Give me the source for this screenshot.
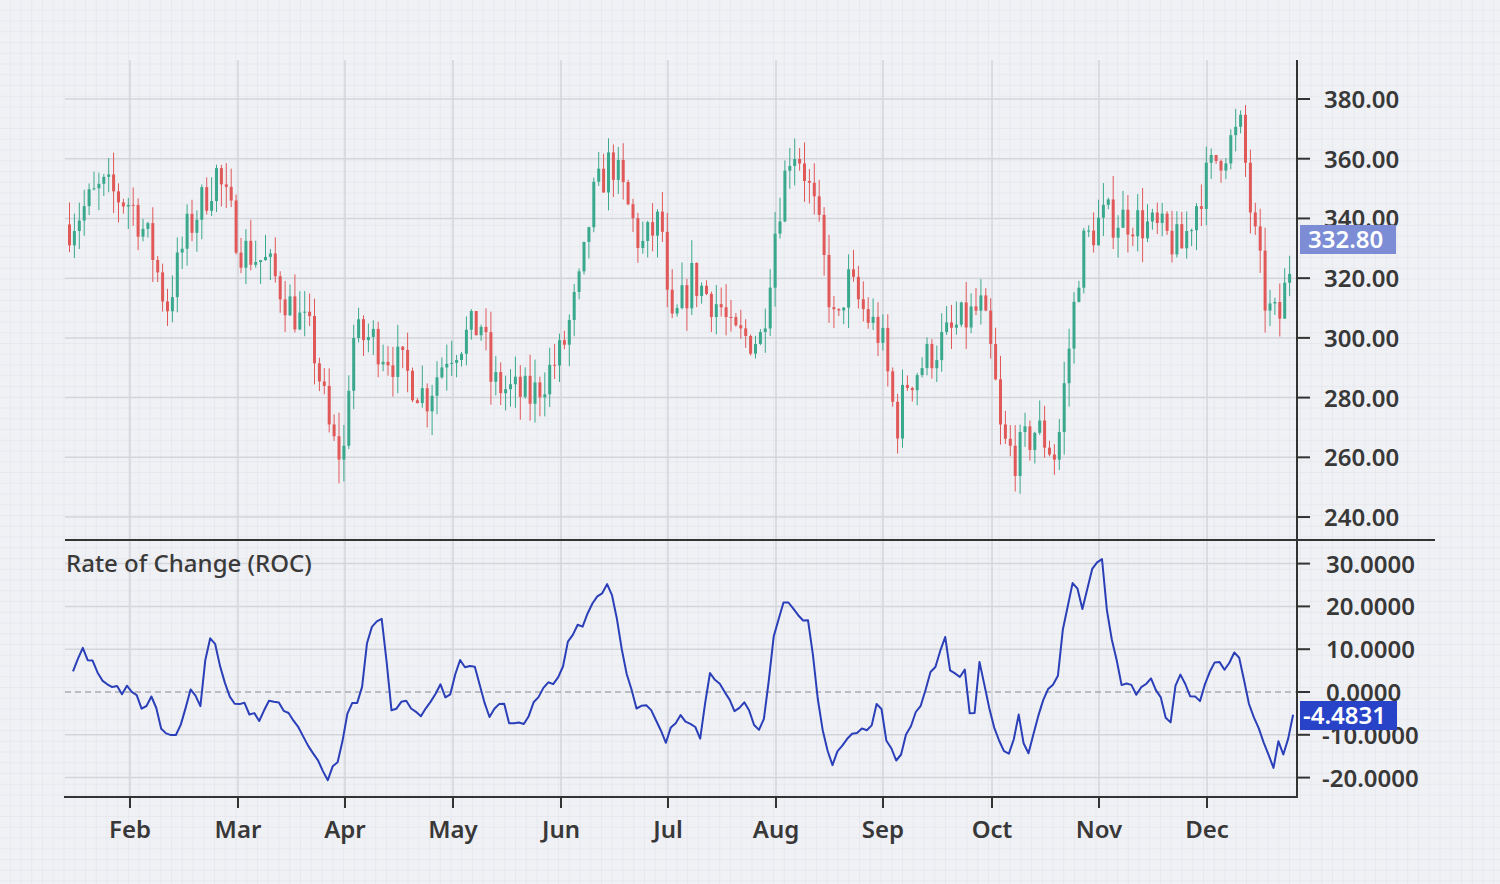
import React from "react";

const priceK: [number, number][] = [[68,338],[100,350],[130,345],[150,330],[165,310],[185,335],[215,355],[240,330],[265,325],[290,310],[310,300],[322,280],[330,265],[342,260],[350,300],[370,300],[400,290],[425,280],[445,295],[480,305],[490,285],[510,282],[530,280],[560,295],[580,320],[590,345],[610,360],[630,340],[640,330],[660,340],[668,300],[690,320],[720,310],[730,300],[760,300],[775,340],[790,365],[800,360],[815,340],[825,320],[835,300],[845,320],[860,310],[880,300],[895,270],[905,285],[930,295],[960,305],[980,310],[992,290],[1000,265],[1015,260],[1035,270],[1055,260],[1065,290],[1080,330],[1100,340],[1130,340],[1160,335],[1180,330],[1200,350],[1215,360],[1240,370],[1250,340],[1265,310],[1277,305],[1293,332.8]];
const rocK: [number, number][] = [[73,6],[85,10],[95,5],[110,0],[130,1],[145,-4],[153,1],[160,-8],[170,-10],[180,-8],[190,0],[200,-3],[208,13],[215,11],[230,-1],[245,-3],[260,-8],[268,-1],[290,-5],[310,-12],[325,-20],[335,-18],[350,-3],[360,-3],[370,16],[382,18],[392,-5],[404,0],[415,-6],[430,-3],[438,2],[448,-3],[460,7],[475,6],[490,-6],[503,-2],[510,-9],[520,-7],[530,-5],[545,1],[560,3],[570,14],[585,17],[595,22],[610,26],[620,13],[635,-4],[650,-4],[665,-12],[680,-5],[695,-7],[700,-10],[710,4],[722,3],[735,-6],[745,-3],[757,-10],[765,-6],[772,12],[785,22],[800,17],[810,16],[818,-3],[833,-18],[845,-10],[860,-8],[870,-10],[878,-1],[888,-12],[898,-18],[905,-10],[918,-4],[930,4],[945,12],[953,3],[965,5],[973,-10],[980,8],[990,-5],[1000,-12],[1010,-16],[1020,-5],[1025,-16],[1035,-8],[1050,3],[1056,0],[1062,14],[1075,27],[1082,20],[1095,32],[1102,30],[1108,16],[1120,3],[1135,0],[1150,3],[1160,-2],[1170,-7],[1178,4],[1190,0],[1200,-2],[1217,9],[1225,6],[1238,9],[1250,-5],[1265,-12],[1273,-19],[1280,-10],[1285,-17],[1290,-8],[1295,-4.5]];

function interp(k: [number, number][], x: number) {
  if (x <= k[0][0]) return k[0][1];
  for (let i = 1; i < k.length; i++) {
    if (x <= k[i][0]) {
      const [x0, y0] = k[i - 1], [x1, y1] = k[i];
      return y0 + ((x - x0) / (x1 - x0)) * (y1 - y0);
    }
  }
  return k[k.length - 1][1];
}
let seed = 7;
const rnd = () => { seed = (seed * 16807) % 2147483647; return seed / 2147483647; };

const py = (p: number) => 99 + (380 - p) * 2.986;
const ry = (r: number) => 692 - r * 4.28;

const candles: { x: number; o: number; c: number; h: number; l: number }[] = [];
let prev = 338;
for (let x = 68; x <= 1293; x += 4.9) {
  const base = interp(priceK, x);
  const c = base + (rnd() - 0.5) * 14;
  const o = prev;
  const h = Math.max(o, c) + rnd() * 8;
  const l = Math.min(o, c) - rnd() * 8;
  candles.push({ x, o, c, h, l });
  prev = c;
}
const rocPts: string[] = [];
for (let x = 73; x <= 1295; x += 4.9) {
  const v = interp(rocK, x) + (rnd() - 0.5) * 2.5;
  rocPts.push(`${x.toFixed(1)},${ry(v).toFixed(1)}`);
}

const months = [["Feb",130],["Mar",238],["Apr",345],["May",453],["Jun",561],["Jul",668],["Aug",776],["Sep",883],["Oct",992],["Nov",1099],["Dec",1207]] as const;
const prices = [380, 360, 340, 320, 300, 280, 260, 240];
const rocs = [30, 20, 10, 0, -10, -20];

export default function App() {
  return (
    <div className="w-[1500px] h-[884px] bg-[#f0f1f5] overflow-hidden font-['Open_Sans','Noto_Sans',sans-serif]">
      <svg width={1500} height={884}>
        <defs>
          <pattern id="g" width={10.75} height={10.75} patternUnits="userSpaceOnUse">
            <path d="M10.75 0V10.75H0" fill="none" stroke="#dfe1e8" strokeWidth={1} />
          </pattern>
        </defs>
        <rect width={1500} height={884} fill="url(#g)" />
        {months.map(([m, x]) => (
          <line key={m} x1={x} x2={x} y1={60} y2={797} stroke="#d3d5db" strokeWidth={1.5} />
        ))}
        {prices.map((p) => (
          <line key={p} x1={65} x2={1297} y1={py(p)} y2={py(p)} stroke="#d3d5db" strokeWidth={1.5} />
        ))}
        {rocs.map((r) => (
          <line key={r} x1={65} x2={1297} y1={ry(r)} y2={ry(r)} stroke={r === 0 ? "#a9abb2" : "#d3d5db"} strokeWidth={1.5} strokeDasharray={r === 0 ? "6 4" : undefined} />
        ))}
        {candles.map((k, i) => {
          const up = k.c >= k.o;
          const col = up ? "#3aa88d" : "#e05858";
          const top = py(Math.max(k.o, k.c));
          const bot = py(Math.min(k.o, k.c));
          return (
            <g key={i}>
              <line x1={k.x + 1.5} x2={k.x + 1.5} y1={py(k.h)} y2={py(k.l)} stroke={col} strokeWidth={1} />
              <rect x={k.x} y={top} width={3} height={Math.max(1, bot - top)} fill={col} />
            </g>
          );
        })}
        <polyline points={rocPts.join(" ")} fill="none" stroke="#2a3fb8" strokeWidth={2} strokeLinejoin="round" />
        <line x1={1297} x2={1297} y1={60} y2={798} stroke="#333" strokeWidth={2} />
        <line x1={65} x2={1435} y1={540} y2={540} stroke="#333" strokeWidth={2} />
        <line x1={64} x2={1298} y1={797} y2={797} stroke="#333" strokeWidth={2} />
        <g fontSize={24} fontWeight={600} fill="#383838">
          {prices.map((p) => (
            <g key={p}>
              <line x1={1297} x2={1310} y1={py(p)} y2={py(p)} stroke="#333" strokeWidth={2} />
              <text x={1324} y={py(p) + 9}>{p.toFixed(2)}</text>
            </g>
          ))}
          {rocs.map((r) => (
            <g key={r}>
              <line x1={1297} x2={1310} y1={ry(r)} y2={ry(r)} stroke="#333" strokeWidth={2} />
              <text x={r < 0 ? 1322 : 1326} y={ry(r) + 9}>{r.toFixed(4)}</text>
            </g>
          ))}
          {months.map(([m, x]) => (
            <g key={m}>
              <line x1={x} x2={x} y1={797} y2={808} stroke="#333" strokeWidth={2} />
              <text x={x} y={838} textAnchor="middle">{m}</text>
            </g>
          ))}
          <rect x={1300} y={225} width={96} height={29} fill="#7c8dd6" />
          <text x={1308} y={248} fill="#fff">332.80</text>
          <rect x={1300} y={701} width={97} height={29} fill="#2843c8" />
          <text x={1303} y={724} fill="#fff">-4.4831</text>
          <text x={66} y={572} fontWeight={500} fill="#3a3a3a">Rate of Change (ROC)</text>
        </g>
      </svg>
    </div>
  );
}
